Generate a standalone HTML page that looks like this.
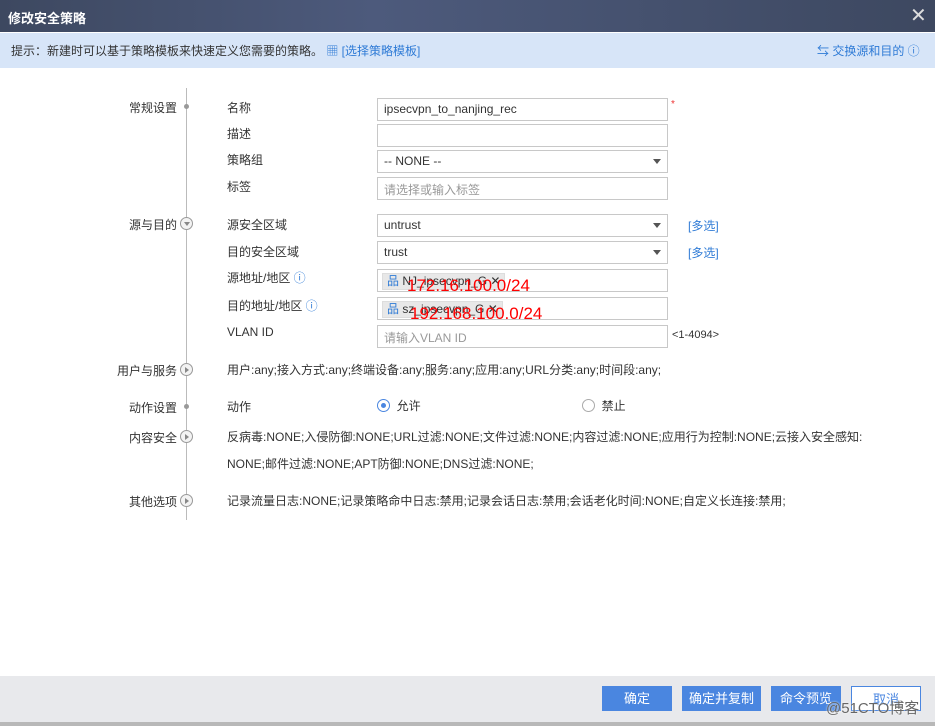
<!DOCTYPE html><html><head><meta charset="utf-8"><style>
*{margin:0;padding:0;box-sizing:border-box}
body{width:935px;height:726px;position:relative;background:#fff;font-family:"Liberation Sans","Noto Sans CJK SC",sans-serif;font-size:12px;color:#333;overflow:hidden}
.a{position:absolute;white-space:nowrap}
.in{position:absolute;left:377px;width:291px;height:23px;border:1px solid #c8c8c8;background:#fff;padding:3px 6px;font-size:12px}
.arr{position:absolute;right:6px;top:8px;border-left:4px solid transparent;border-right:4px solid transparent;border-top:5px solid #555}
.lb{position:absolute;left:227px}
.sec{position:absolute;right:758px;text-align:right}
.ci{position:absolute;left:180px;width:13px;height:13px;border:1px solid #999;border-radius:50%;background:#f3f3f3}
.ci:after{content:"";position:absolute;left:3px;top:4px;border-left:3px solid transparent;border-right:3px solid transparent;border-top:4px solid #888}
.cr:after{left:4px;top:3px;border-top:3px solid transparent;border-bottom:3px solid transparent;border-left:4px solid #888;border-right:0}
.dot{position:absolute;left:184px;width:5px;height:5px;border-radius:50%;background:#999}
.blue{color:#2f7bd6}
.tag{position:absolute;left:4px;top:3px;height:17px;background:#e8e8e8;border:1px solid #ddd;padding:0 4px;font-size:12px;line-height:15px}
.red{position:absolute;color:#f00;font-family:"Liberation Sans",sans-serif;font-size:17px}
.btn{position:absolute;top:686px;height:25px;background:#4a86e0;color:#fff;text-align:center;line-height:25px;font-size:13px}
</style></head><body>
<div class="a" style="left:0;top:0;width:935px;height:32px;background:linear-gradient(90deg,#3d4860,#4d5a7c 40%,#3d4860)"></div>
<div class="a" style="left:8px;top:8px;color:#fff;font-size:13px;font-weight:bold">修改安全策略</div>
<div class="a" style="left:910px;top:3px;color:#ddd;font-size:20px">✕</div>
<div class="a" style="left:0;top:33px;width:935px;height:35px;background:#d7e5f8"></div>
<div class="a" style="left:11px;top:42px;color:#333">提示：新建时可以基于策略模板来快速定义您需要的策略。 <span class="blue">▦ [选择策略模板]</span></div>
<div class="a blue" style="left:817px;top:42px">⇆ 交换源和目的 ⓘ</div>
<div class="a" style="left:186px;top:88px;width:1px;height:432px;background:#bbb"></div>
<div class="sec" style="top:99px">常规设置</div><div class="dot" style="top:104px"></div>
<div class="sec" style="top:216px">源与目的</div><div class="ci" style="top:217px"></div>
<div class="sec" style="top:362px">用户与服务</div><div class="ci cr" style="top:363px"></div>
<div class="sec" style="top:399px">动作设置</div><div class="dot" style="top:404px"></div>
<div class="sec" style="top:429px">内容安全</div><div class="ci cr" style="top:430px"></div>
<div class="sec" style="top:493px">其他选项</div><div class="ci cr" style="top:494px"></div>
<div class="lb" style="top:99px">名称</div>
<div class="lb" style="top:125px">描述</div>
<div class="lb" style="top:151px">策略组</div>
<div class="lb" style="top:178px">标签</div>
<div class="lb" style="top:216px">源安全区域</div>
<div class="lb" style="top:243px">目的安全区域</div>
<div class="lb" style="top:269px">源地址/地区<span class="blue"> ⓘ</span></div>
<div class="lb" style="top:297px">目的地址/地区<span class="blue"> ⓘ</span></div>
<div class="lb" style="top:325px">VLAN ID</div>
<div class="in" style="top:98px">ipsecvpn_to_nanjing_rec</div>
<div class="a" style="left:671px;top:99px;color:#e33;font-size:10px">*</div>
<div class="in" style="top:124px"></div>
<div class="in" style="top:150px">-- NONE --<span class="arr"></span></div>
<div class="in" style="top:177px;color:#999">请选择或输入标签</div>
<div class="in" style="top:214px">untrust<span class="arr"></span></div>
<div class="in" style="top:241px">trust<span class="arr"></span></div>
<div class="in" style="top:269px"><span class="tag"><span class="blue">品</span> NJ_ipsecvpn_G ✕</span></div>
<div class="in" style="top:297px"><span class="tag"><span class="blue">品</span> sz_ipsecvpn_G ✕</span></div>
<div class="in" style="top:325px;color:#999">请输入VLAN ID</div>
<div class="a blue" style="left:688px;top:217px">[多选]</div>
<div class="a blue" style="left:688px;top:244px">[多选]</div>
<div class="a" style="left:672px;top:329px;font-size:11px">&lt;1-4094&gt;</div>
<div class="red" style="left:407px;top:276px">172.16.100.0/24</div>
<div class="red" style="left:410px;top:304px">192.168.100.0/24</div>
<div class="lb" style="top:361px">用户:any;接入方式:any;终端设备:any;服务:any;应用:any;URL分类:any;时间段:any;</div>
<div class="lb" style="top:398px">动作</div>
<div class="a" style="left:377px;top:397px"><span style="display:inline-block;width:13px;height:13px;border:1px solid #4a86e0;border-radius:50%;vertical-align:-2px;position:relative"><span style="position:absolute;left:3px;top:3px;width:5px;height:5px;border-radius:50%;background:#4a86e0"></span></span> &nbsp;允许</div>
<div class="a" style="left:582px;top:397px"><span style="display:inline-block;width:13px;height:13px;border:1px solid #aaa;border-radius:50%;vertical-align:-2px"></span> &nbsp;禁止</div>
<div class="lb" style="top:428px">反病毒:NONE;入侵防御:NONE;URL过滤:NONE;文件过滤:NONE;内容过滤:NONE;应用行为控制:NONE;云接入安全感知:</div>
<div class="lb" style="top:455px">NONE;邮件过滤:NONE;APT防御:NONE;DNS过滤:NONE;</div>
<div class="lb" style="top:492px">记录流量日志:NONE;记录策略命中日志:禁用;记录会话日志:禁用;会话老化时间:NONE;自定义长连接:禁用;</div>
<div class="a" style="left:0;top:676px;width:935px;height:46px;background:#e8e9ec"></div>
<div class="a" style="left:0;top:722px;width:935px;height:4px;background:#b8b8b8"></div>
<div class="btn" style="left:602px;width:70px">确定</div>
<div class="btn" style="left:682px;width:79px">确定并复制</div>
<div class="btn" style="left:771px;width:70px">命令预览</div>
<div class="btn" style="left:851px;width:70px;background:#fff;border:1px solid #4a86e0;color:#4a86e0">取消</div>
<div class="a" style="left:826px;top:697px;color:#666;font-size:15px;text-shadow:0 0 2px #fff">@51CTO博客</div>
</body></html>
